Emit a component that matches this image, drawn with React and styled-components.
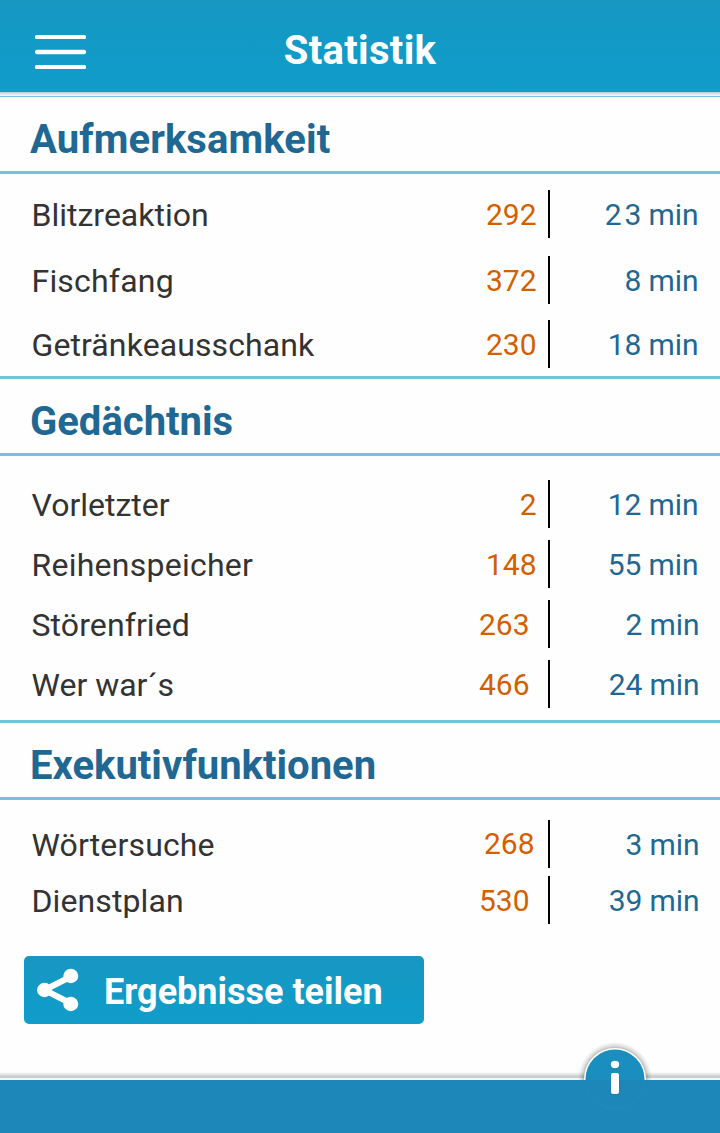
import React from 'react'
import styled, { createGlobalStyle } from 'styled-components'

const sections = [
    {
        title: 'Aufmerksamkeit',
        padding: '16px 0 8px',
        rows: [
            { name: 'Blitzreaktion', score: '292', time: '23', wide: true, gap: 18 },
            { name: 'Fischfang', tracking: 0.2, score: '372', time: '8', gap: 16 },
            { name: 'Getränkeausschank', tracking: 0.1, score: '230', time: '18' },
        ],
    },
    {
        title: 'Gedächtnis',
        padding: '24px 0 12px',
        rows: [
            { name: 'Vorletzter', score: '2', time: '12', gap: 12 },
            { name: 'Reihenspeicher', tracking: 0.25, score: '148', time: '55', gap: 12 },
            { name: 'Störenfried', tracking: 0.1, score: '263', time: '2', inset: 7, end: 20.5, gap: 12 },
            { name: 'Wer war´s', score: '466', time: '24', inset: 7, end: 20.5 },
        ],
    },
    {
        title: 'Exekutivfunktionen',
        padding: '20px 0 0',
        rows: [
            { name: 'Wörtersuche', tracking: 0.15, score: '268', time: '3', inset: 2, end: 20.5, lift: 2, gap: 8 },
            { name: 'Dienstplan', tracking: 0.1, score: '530', time: '39', inset: 7, end: 20.5 },
        ],
    },
]

const StatRow = ({ row }) => (
    <Row $gap={row.gap}>
        <Name $tracking={row.tracking}>{row.name}</Name>
        <Score $inset={row.inset} $lift={row.lift}>{row.score}</Score>
        <Time $end={row.end}>
            {row.wide ? <><Tens>{row.time[0]}</Tens>{row.time[1]}</> : row.time} min
        </Time>
    </Row>
)

const App = () => {
    return (
        <Screen>
            <GlobalStyle />

            {/* HEADER */}
            <Header>
                <MenuButton aria-label='Menü'>
                    <svg width='51' height='36' viewBox='0 0 51 36' fill='#fff'>
                        <rect x='0' y='1' width='51' height='4' rx='1.5' />
                        <rect x='0' y='15.7' width='51' height='4.6' rx='2' />
                        <rect x='0' y='31' width='51' height='4' rx='1.5' />
                    </svg>
                </MenuButton>
                <Title>Statistik</Title>
            </Header>
            <HeaderShadow />

            {/* STATISTICS */}
            {sections.map((section, index) => (
                <section key={section.title}>
                    <SectionTitle $first={index === 0}>{section.title}</SectionTitle>
                    <Rows $padding={section.padding}>
                        {section.rows.map((row) => (
                            <StatRow key={row.name} row={row} />
                        ))}
                    </Rows>
                </section>
            ))}

            <ShareButton>
                <svg width='44' height='44' viewBox='0 0 44 44'>
                    <path d='M36 8 8.500 22 36 36' fill='none' stroke='#fff' strokeWidth='6' />
                    <ellipse cx='34.800' cy='8' rx='7.500' ry='7.200' fill='#fff' />
                    <ellipse cx='8.500' cy='22' rx='7.500' ry='7.200' fill='#fff' />
                    <ellipse cx='34.800' cy='36' rx='7.500' ry='7.200' fill='#fff' />
                </svg>
                <ShareLabel>Ergebnisse teilen</ShareLabel>
            </ShareButton>

            {/* FOOTER */}
            <Footer>
                <FooterEdge />
                <InfoButton aria-label='Info'>
                    <svg width='80' height='72' viewBox='0 0 80 72'>
                        <defs>
                            <radialGradient id='halo'>
                                <stop offset='0.82' stopColor='#000' stopOpacity='0.3' />
                                <stop offset='0.9' stopColor='#000' stopOpacity='0.12' />
                                <stop offset='1' stopColor='#000' stopOpacity='0' />
                            </radialGradient>
                            <clipPath id='top'><rect width='80' height='40' /></clipPath>
                        </defs>
                        <g clipPath='url(#top)'>
                            <circle cx='40' cy='39' r='37' fill='url(#halo)' />
                            <circle cx='40' cy='39' r='31' fill='#fff' />
                            <circle cx='40' cy='39' r='29.500' fill='#1a8fbf' />
                        </g>
                        <path d='M10.500 44a30 30 0 0 0 59 0' fill='none' stroke='#268dbe' strokeWidth='0.500' />
                        <ellipse cx='40' cy='25.300' rx='4.800' ry='4.300' fill='#0d6d9c' opacity='0.350' />
                        <rect x='35.500' y='33' width='9' height='22' rx='2.500' fill='#0d6d9c' opacity='0.350' />
                        <ellipse cx='40' cy='24.500' rx='4.200' ry='3.700' fill='#fff' />
                        <rect x='36' y='33' width='8' height='21' rx='2' fill='#fff' />
                    </svg>
                </InfoButton>
            </Footer>
        </Screen>
    )
}

const GlobalStyle = createGlobalStyle`
    * {
        box-sizing: border-box;
    }
    body {
        margin: 0;
        background: #fefefe;
    }
    svg {
        display: block;
    }
`

const Screen = styled.main`
    display: flex;
    flex-direction: column;
    width: 720px;
    height: 1133px;
    overflow: hidden;
    background: #fefefe;
    font-family: Roboto, "Liberation Sans", sans-serif;
`

const Header = styled.header`
    display: grid;
    grid-template-columns: 120px 1fr 120px;
    align-items: center;
    height: 92px;
    flex-shrink: 0;
    background: linear-gradient(#1697c2, #109dca);
`

const MenuButton = styled.button`
    padding: 12px 0 0 35px;
    border: 0;
    background: none;
`

const Title = styled.h1`
    margin: 0;
    padding-top: 10px;
    font-size: 40px;
    font-weight: 700;
    line-height: 48px;
    letter-spacing: 0.3px;
    text-align: center;
    color: #fff;
`

const HeaderShadow = styled.div`
    height: 4px;
    flex-shrink: 0;
    background: linear-gradient(#b3c6d8, #dde3ed 45%, #f6f8fb);
`

const SectionTitle = styled.h2`
    height: ${({ $first }) => ($first ? 78 : 80)}px;
    margin: 0;
    padding: 19px 30px 0;
    border-top: ${({ $first }) => ($first ? 1 : 3)}px solid #74c2db;
    border-bottom: 3px solid #74c2db;
    font-size: 40px;
    font-weight: 700;
    line-height: 48px;
    letter-spacing: ${({ $first }) => ($first ? 0.1 : 0)}px;
    color: #1f6893;
`

const Rows = styled.div`
    padding: ${({ $padding }) => $padding};
`

const Row = styled.div`
    display: grid;
    grid-template-columns: 1fr 120px 172px;
    grid-template-rows: 48px;
    margin-bottom: ${({ $gap = 0 }) => $gap}px;
    padding-left: 31.5px;
    line-height: 48px;
`

const Name = styled.span`
    padding-top: 1px;
    font-size: 32px;
    letter-spacing: ${({ $tracking = 0 }) => $tracking}px;
    color: #333;
`

const Score = styled.span`
    padding-right: ${({ $inset = 0 }) => 11.5 + $inset}px;
    border-right: 2px solid #000;
    margin-right: -2px;
    font-size: 30px;
    line-height: ${({ $lift = 0 }) => 50 - $lift}px;
    text-align: right;
    color: #d45f00;
`

const Time = styled.span`
    padding-right: ${({ $end = 21.5 }) => $end}px;
    font-size: 30px;
    line-height: 50px;
    letter-spacing: -0.1px;
    text-align: right;
    color: #1f6893;
`

const Tens = styled.span`
    letter-spacing: 3px;
`

const ShareButton = styled.button`
    display: flex;
    align-items: center;
    width: 400px;
    height: 68px;
    margin: 32px 0 0 24px;
    padding: 0 12px;
    flex-shrink: 0;
    border: 0;
    border-radius: 5px;
    background: linear-gradient(#1697c2, #109dca);
    font-family: inherit;
`

const ShareLabel = styled.span`
    padding: 3px 0 0 24px;
    font-size: 36px;
    font-weight: 700;
    color: #fff;
    white-space: nowrap;
`

const Footer = styled.footer`
    position: relative;
    height: 61px;
    margin-top: auto;
    flex-shrink: 0;
    background: #1e87b9;
`

const FooterEdge = styled.div`
    height: 8px;
    background: linear-gradient(#fefefe, #c6c6c6 5px, #d0d6dc 6px, #f2f8fc 6px);
`

const InfoButton = styled.button`
    position: absolute;
    top: -32px;
    left: 575px;
    padding: 0;
    border: 0;
    background: none;
`

export default App
